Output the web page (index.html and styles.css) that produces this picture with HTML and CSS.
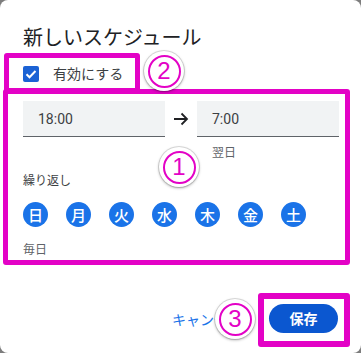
FILE: index.html
```html
<!DOCTYPE html>
<html lang="ja">
<head>
<meta charset="utf-8">
<link rel="stylesheet" href="styles.css">
</head>
<body>
<div class="dialog">
  <h1 class="title">新しいスケジュール</h1>
  <label class="enable">
    <span class="checkbox"><svg viewBox="0 0 16 16" width="16" height="16"><path d="M3.5 8.2l3 3 6-6.2" fill="none" stroke="#fff" stroke-width="2"/></svg></span>
    <span class="enable-text">有効にする</span>
  </label>
  <div class="times">
    <div class="field">18:00</div>
    <div class="arrow"><svg viewBox="0 0 16 14" width="16" height="14"><path d="M1 7h13M8.5 1.5L14 7l-5.5 5.5" fill="none" stroke="#202124" stroke-width="1.8"/></svg></div>
    <div class="field">7:00</div>
  </div>
  <div class="next-day">翌日</div>
  <div class="label">繰り返し</div>
  <div class="days">
    <span class="day">日</span>
    <span class="day">月</span>
    <span class="day">火</span>
    <span class="day">水</span>
    <span class="day">木</span>
    <span class="day">金</span>
    <span class="day">土</span>
  </div>
  <div class="label every">毎日</div>
  <div class="footer">
    <button class="cancel">キャンセル</button>
    <button class="save">保存</button>
  </div>

  <div class="anno box-days"></div>
  <div class="anno box-enable"></div>
  <div class="anno box-save"></div>
  <div class="marker m1"><span class="ring">1</span></div>
  <div class="marker m2"><span class="ring">2</span></div>
  <div class="marker m3"><span class="ring">3</span></div>
</div>
</body>
</html>
```
FILE: styles.css
```css
* { box-sizing: border-box; }
html, body { margin: 0; padding: 0; }
body {
  background: #7d7d7d;
  width: 361px;
  height: 353px;
  overflow: hidden;
  font-family: "Noto Sans CJK JP", "Noto Sans", sans-serif;
}
.dialog {
  position: relative;
  width: 361px;
  height: 353px;
  background: #fff;
  border-radius: 8px;
  padding: 0 22px 0 23px;
  color: #202124;
}
.title {
  margin: 0;
  padding-top: 25px;
  font-size: 20px;
  line-height: 24px;
  font-weight: 400;
  color: #202124;
}
.enable {
  display: flex;
  align-items: center;
  gap: 14px;
  margin-top: 16px;
  height: 17px;
}
.checkbox {
  width: 16px;
  height: 16px;
  border-radius: 2px;
  background: #1b62d4;
  display: flex;
}
.enable-text {
  font-size: 14px;
  line-height: 17px;
  color: #3c4043;
}
.times {
  display: flex;
  margin-top: 19px;
}
.field {
  width: 142px;
  height: 36px;
  background: #f1f3f4;
  border-bottom: 1px solid #5f6368;
  padding-left: 15px;
  font-family: Roboto, "Noto Sans", sans-serif;
  font-size: 14px;
  line-height: 36px;
  color: #3c4043;
}
.arrow {
  width: 32px;
  height: 36px;
  display: flex;
  align-items: center;
  justify-content: center;
}
.next-day {
  margin-top: 7px;
  padding-left: 189px;
  font-size: 12px;
  line-height: 16px;
  color: #5f6368;
}
.label {
  margin-top: 12px;
  font-size: 12px;
  line-height: 16px;
  color: #3c4043;
}
.days {
  display: flex;
  gap: 18px;
  margin-top: 14px;
}
.day {
  width: 25px;
  height: 25px;
  border-radius: 50%;
  background: #1a73e8;
  color: #fff;
  font-size: 15px;
  line-height: 25px;
  text-align: center;
  font-weight: 500;
}
.label.every {
  margin-top: 14px;
  color: #5f6368;
}
.footer {
  display: flex;
  justify-content: flex-end;
  align-items: center;
  margin-top: 47px;
  margin-right: 1px;
}
button {
  font-family: "Noto Sans CJK JP", "Noto Sans", sans-serif;
  border: 0;
  background: none;
  padding: 0;
  font-size: 14px;
}
.cancel {
  color: #1a73e8;
  margin-right: 27px;
  line-height: 20px;
}
.save {
  width: 69px;
  height: 29px;
  border-radius: 15px;
  background: #0b57d0;
  color: #fff;
  font-weight: 700;
  line-height: 29px;
}
.anno {
  position: absolute;
  border: 5px solid #e302c6;
  border-radius: 3px;
}
.box-days { left: 3px; top: 89px; width: 347px; height: 176px; }
.box-enable { left: 4px; top: 53px; width: 136px; height: 40px; }
.box-save { left: 258px; top: 293px; width: 92px; height: 54px; border-width: 6px; }
.marker {
  position: absolute;
  width: 40px;
  height: 40px;
  margin: -20px 0 0 -20px;
  border-radius: 50%;
  background: #fff;
  box-shadow: 0 0 0 1px rgba(0,0,0,0.12), 0 1px 3px rgba(0,0,0,0.35);
  display: flex;
  align-items: center;
  justify-content: center;
}
.ring {
  width: 33px;
  height: 33px;
  border: 2.5px solid #e302c6;
  border-radius: 50%;
  color: #e302c6;
  font-family: "Liberation Sans", Arial, sans-serif;
  font-size: 24px;
  line-height: 28px;
  text-align: center;
}
.m1 { left: 179px; top: 167px; }
.m2 { left: 164px; top: 71px; }
.m3 { left: 235px; top: 319px; }
```
